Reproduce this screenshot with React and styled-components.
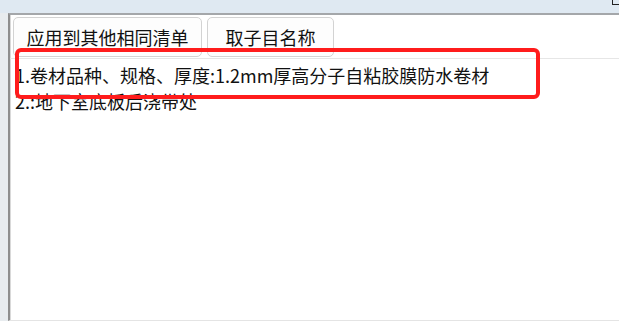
import React from "react";
import styled, { createGlobalStyle } from "styled-components";

const GlobalStyle = createGlobalStyle`
  html, body {
    margin: 0;
    padding: 0;
    background: #ffffff;
  }
  body {
    font-family: "Noto Sans CJK SC", "Microsoft YaHei", sans-serif;
  }
`;

const Page = styled.div`
  width: 619px;
  height: 321px;
  display: flex;
  flex-direction: column;
  overflow: hidden;
  position: relative;
`;

const TopBar = styled.div`
  height: 13px;
  background: #dfe9f2;
  display: flex;
  justify-content: flex-end;
`;

const CornerIcon = styled.div`
  width: 6px;
  height: 4px;
  border-left: 1px solid #222;
  border-bottom: 1px solid #222;
`;

const Body = styled.div`
  flex: 1;
  display: flex;
`;

const SideStrip = styled.div`
  width: 8px;
  background: #e8ecef;
`;

const Panel = styled.div`
  flex: 1;
  display: flex;
  flex-direction: column;
  background: #ffffff;
  border-top: 2px solid #a4a7aa;
  border-left: 2px solid #8e8e8e;
  border-bottom: 1px solid #e4e4e4;
  box-shadow: inset 1px 0 0 #d9d9d9;
`;

const Toolbar = styled.div`
  display: flex;
  gap: 5px;
  padding: 2px 4px 1px 3px;
  border-bottom: 1px solid #e6e6e6;
`;

const ToolButton = styled.button`
  width: ${(p) => p.$w}px;
  height: 40px;
  border: 1px solid #d3d3d3;
  border-radius: 5px;
  background: #fdfdfd;
  color: #111111;
  font-family: "Noto Sans CJK SC", "Microsoft YaHei", sans-serif;
  font-size: 18px;
  padding: 0;
  display: flex;
  align-items: center;
  justify-content: center;
`;

const TextArea = styled.div`
  flex: 1;
  padding: 3px 0 0 5px;
  font-size: 18px;
  line-height: 26px;
  color: #111111;
`;

const Line = styled.div`
  white-space: nowrap;
`;

const Highlight = styled.div`
  position: absolute;
  left: 15px;
  top: 48px;
  width: 525px;
  height: 51px;
  box-sizing: border-box;
  border: 4px solid #ff1c1c;
  border-radius: 6px;
  pointer-events: none;
`;

const App = () => {
  return (
    <>
      <GlobalStyle />
      <Page>
        <TopBar>
          <CornerIcon />
        </TopBar>
        <Body>
          <SideStrip />
          <Panel>
            <Toolbar>
              <ToolButton $w={189}>应用到其他相同清单</ToolButton>
              <ToolButton $w={127}>取子目名称</ToolButton>
            </Toolbar>
            <TextArea>
              <Line>1.卷材品种、规格、厚度:1.2mm厚高分子自粘胶膜防水卷材</Line>
              <Line>2.:地下室底板后浇带处</Line>
            </TextArea>
          </Panel>
        </Body>
        <Highlight />
      </Page>
    </>
  );
};

export default App;
